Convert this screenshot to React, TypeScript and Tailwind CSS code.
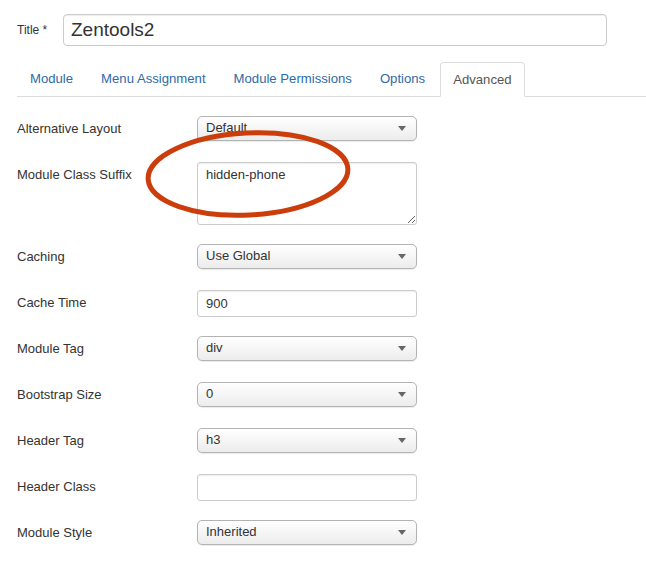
import React from "react";

const font = { fontFamily: '"Liberation Sans", Arial, Helvetica, sans-serif' };

function Select({ value }: { value: string }) {
  return (
    <div className="relative w-[220px] h-[25px] rounded-[5px] border border-[#b3b3b3] bg-gradient-to-b from-white to-[#ececec] shadow-[0_1px_1px_rgba(0,0,0,0.08)]">
      <span className="absolute left-[8px] top-0 leading-[22px] text-[13px] text-[#333]">{value}</span>
      <span className="absolute right-[10px] top-[9px] w-0 h-0 border-l-[4px] border-r-[4px] border-t-[5px] border-l-transparent border-r-transparent border-t-[#666]" />
    </div>
  );
}

function TextInput({ value = "" }: { value?: string }) {
  return (
    <div className="w-[220px] h-[27px] rounded-[3px] border border-[#cccccc] bg-white shadow-[inset_0_1px_1px_rgba(0,0,0,0.075)] px-[8px] text-[13px] leading-[25px] text-[#333]">
      {value}
    </div>
  );
}

function Row({ label, children, tall }: { label: string; children: React.ReactNode; tall?: boolean }) {
  return (
    <div className={`flex items-start pt-[11px] ${tall ? "h-[82px]" : "h-[46px]"}`}>
      <div className="w-[180px] text-[13px] leading-[25px] text-[#333]">{label}</div>
      {children}
    </div>
  );
}

const tabs = ["Module", "Menu Assignment", "Module Permissions", "Options"];

export default function App() {
  return (
    <div className="relative w-[646px] h-[588px] bg-white overflow-hidden" style={font}>
      <div className="pl-[17px] pt-[14px]">
        <div className="flex items-center h-[32px]">
          <span className="w-[46px] text-[12px] text-[#333]">Title *</span>
          <div className="w-[544px] h-[32px] rounded-[4px] border border-[#cccccc] shadow-[inset_0_1px_1px_rgba(0,0,0,0.075)] px-[7px] text-[19px] leading-[30px] text-[#333]">
            Zentools2
          </div>
        </div>

        <div className="mt-[16px] flex items-end h-[35px] border-b border-[#dddddd]">
          {tabs.map((t) => (
            <div
              key={t}
              className="mr-[2px] px-[12px] h-[35px] border border-transparent text-[13.15px] leading-[33px] text-[#2f6aa6]"
            >
              {t}
            </div>
          ))}
          <div className="-mb-px px-[12px] h-[35px] border border-[#dddddd] border-b-white rounded-t-[4px] bg-white text-[13.15px] leading-[33px] text-[#555]">
            Advanced
          </div>
        </div>

        <div className="mt-[8px]">
          <Row label="Alternative Layout">
            <Select value="Default" />
          </Row>
          <Row label="Module Class Suffix" tall>
            <textarea
              readOnly
              defaultValue="hidden-phone"
              className="w-[220px] h-[63px] rounded-[3px] border border-[#cccccc] shadow-[inset_0_1px_1px_rgba(0,0,0,0.075)] px-[8px] py-[3px] text-[13px] leading-[18px] text-[#333] outline-none"
              style={font}
            />
          </Row>
          <Row label="Caching">
            <Select value="Use Global" />
          </Row>
          <Row label="Cache Time">
            <TextInput value="900" />
          </Row>
          <Row label="Module Tag">
            <Select value="div" />
          </Row>
          <Row label="Bootstrap Size">
            <Select value="0" />
          </Row>
          <Row label="Header Tag">
            <Select value="h3" />
          </Row>
          <Row label="Header Class">
            <TextInput />
          </Row>
          <Row label="Module Style">
            <Select value="Inherited" />
          </Row>
        </div>
      </div>

      <svg className="absolute left-0 top-0 pointer-events-none" width="646" height="588">
        <ellipse
          cx="248"
          cy="174"
          rx="100"
          ry="41"
          transform="rotate(-3 248 174)"
          fill="none"
          stroke="#cc3d0c"
          strokeWidth="5"
        />
      </svg>
    </div>
  );
}
